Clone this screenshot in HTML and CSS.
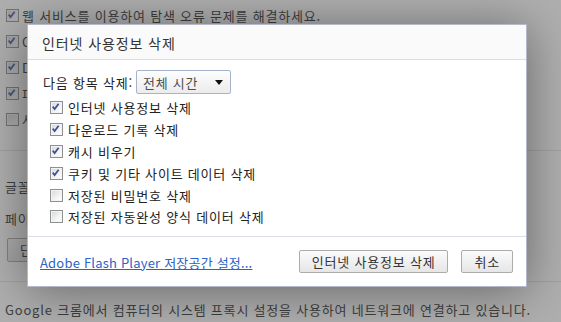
FILE: index.html
```html
<!DOCTYPE html>
<html lang="ko">
<head>
<meta charset="utf-8">
<title>인터넷 사용정보 삭제</title>
<link rel="stylesheet" href="styles.css">
</head>
<body>
<div class="page">
  <div class="bg-group">
    <div class="bg-row"><span class="cb checked"><svg viewBox="0 0 13 13"><path d="M3 6.5 L5.3 9.3 L10 3"/></svg></span><span>웹 서비스를 이용하여 탐색 오류 문제를 해결하세요.</span></div>
    <div class="bg-row"><span class="cb checked"><svg viewBox="0 0 13 13"><path d="M3 6.5 L5.3 9.3 L10 3"/></svg></span><span>Chrome 예측 서비스 사용</span></div>
    <div class="bg-row"><span class="cb checked"><svg viewBox="0 0 13 13"><path d="M3 6.5 L5.3 9.3 L10 3"/></svg></span><span>DNS 사전 가져오기 사용</span></div>
    <div class="bg-row"><span class="cb checked"><svg viewBox="0 0 13 13"><path d="M3 6.5 L5.3 9.3 L10 3"/></svg></span><span>피싱 및 악성코드 차단 사용</span></div>
    <div class="bg-row"><span class="cb"></span><span>사용 통계 보내기</span></div>
  </div>
  <div class="bg-group web">
    <div class="bg-line first">글꼴 크기:</div>
    <div class="bg-line">페이지 확대/축소:</div>
    <div class="bg-btn">단축키 설정...</div>
  </div>
  <div class="bg-group net">
    <div class="bg-line">Google 크롬에서 컴퓨터의 시스템 프록시 설정을 사용하여 네트워크에 연결하고 있습니다.</div>
  </div>
</div>
<div class="overlay"></div>
<div class="dialog">
  <div class="dlg-head">인터넷 사용정보 삭제</div>
  <div class="dlg-body">
    <div class="range">
      <span>다음 항목 삭제:</span>
      <span class="select"><span>전체 시간</span><span class="tri"></span></span>
    </div>
    <div class="opts">
      <div class="opt"><span class="cb checked"><svg viewBox="0 0 13 13"><path d="M3 6.5 L5.3 9.3 L10 3"/></svg></span><span>인터넷 사용정보 삭제</span></div>
      <div class="opt"><span class="cb checked"><svg viewBox="0 0 13 13"><path d="M3 6.5 L5.3 9.3 L10 3"/></svg></span><span>다운로드 기록 삭제</span></div>
      <div class="opt"><span class="cb checked"><svg viewBox="0 0 13 13"><path d="M3 6.5 L5.3 9.3 L10 3"/></svg></span><span>캐시 비우기</span></div>
      <div class="opt"><span class="cb checked"><svg viewBox="0 0 13 13"><path d="M3 6.5 L5.3 9.3 L10 3"/></svg></span><span>쿠키 및 기타 사이트 데이터 삭제</span></div>
      <div class="opt"><span class="cb"></span><span>저장된 비밀번호 삭제</span></div>
      <div class="opt"><span class="cb"></span><span>저장된 자동완성 양식 데이터 삭제</span></div>
    </div>
  </div>
  <div class="dlg-foot">
    <a class="link" href="#">Adobe Flash Player 저장공간 설정...</a>
    <div class="btns">
      <span class="btn">인터넷 사용정보 삭제</span>
      <span class="btn">취소</span>
    </div>
  </div>
</div>
</body>
</html>
```
FILE: styles.css
```css
html, body {
  margin: 0;
  padding: 0;
}
body {
  width: 561px;
  height: 322px;
  overflow: hidden;
  position: relative;
  background: #fff;
  font-family: "Noto Sans CJK KR", "Noto Sans", sans-serif;
  font-size: 13px;
  letter-spacing: 0.8px;
  color: #2a2a2a;
}
.page {
  display: flex;
  flex-direction: column;
}
.bg-group {
  display: flex;
  flex-direction: column;
  border-bottom: 1px solid #e2e2e2;
}
.bg-group:first-child {
  padding: 2px 0 18px 6px;
}
.bg-row {
  display: flex;
  align-items: center;
  gap: 3px;
  height: 26px;
  white-space: nowrap;
}
.bg-group.web {
  padding: 20px 0 19px 5px;
}
.bg-line {
  height: 31px;
  line-height: 31px;
  white-space: nowrap;
}
.bg-line.first {
  height: 32px;
}
.bg-btn {
  margin-top: 4px;
  margin-left: 2px;
  width: 80px;
  height: 22px;
  line-height: 22px;
  border: 1px solid #aaa;
  border-radius: 2px;
  padding-left: 12px;
  background: linear-gradient(#fafafa, #e8e8e8);
  white-space: nowrap;
}
.bg-group.net {
  border-bottom: none;
  padding: 12px 0 0 5px;
}
.cb {
  width: 11px;
  height: 11px;
  border: 1px solid #8e8f8f;
  background: linear-gradient(135deg, #d6d6d6, #f8f8f8 70%, #fff);
  box-shadow: inset 0 0 0 1px #f4f4f4;
  display: inline-flex;
  flex: none;
}
.cb svg {
  width: 11px;
  height: 11px;
}
.cb path {
  fill: none;
  stroke: #3a4ea2;
  stroke-width: 2;
  transform: translate(-1px, -1px);
}
.overlay {
  position: absolute;
  inset: 0;
  background: rgba(86, 86, 86, 0.47);
}
.dialog {
  position: absolute;
  left: 27px;
  top: 24px;
  width: 498px;
  height: 261px;
  border: 1px solid #b4b8c8;
  background: #fff;
  box-shadow: 0 4px 46px rgba(0, 0, 0, 0.42);
  display: flex;
  flex-direction: column;
  color: #222;
}
.dlg-head {
  box-sizing: border-box;
  height: 35px;
  background: #fafafa;
  border-bottom: 1px solid #dcdce4;
  padding-left: 14px;
  font-size: 14px;
  letter-spacing: 0.9px;
  line-height: 36px;
  color: #333;
}
.dlg-body {
  padding: 10px 0 8px 15px;
  flex: 1;
  border-bottom: 1px solid #dcdce4;
}
.range {
  display: flex;
  align-items: center;
  gap: 3px;
  height: 24px;
}
.select {
  width: 80px;
  height: 22px;
  border: 1px solid #a6b4cb;
  border-radius: 2px;
  background: linear-gradient(#fdfdfd, #ececec);
  display: flex;
  align-items: center;
  justify-content: space-between;
  padding: 0 7px 0 6px;
  color: #505050;
}
.tri {
  width: 0;
  height: 0;
  border-left: 4px solid transparent;
  border-right: 4px solid transparent;
  border-top: 5px solid #111;
  margin-top: 1px;
}
.opts {
  margin-top: 3px;
  padding-left: 7px;
  display: flex;
  flex-direction: column;
}
.opt {
  display: flex;
  align-items: center;
  gap: 5px;
  height: 21.8px;
  white-space: nowrap;
}
.dlg-foot {
  height: 50px;
  display: flex;
  align-items: center;
  justify-content: space-between;
  padding: 0 13px 0 12px;
}
.link {
  color: #2d62c6;
  text-decoration: underline;
  margin-top: 2px;
  letter-spacing: 0.2px;
}
.btns {
  display: flex;
  gap: 13px;
}
.btn {
  height: 21px;
  line-height: 21px;
  border: 1px solid #acacac;
  border-radius: 2px;
  background: linear-gradient(#fbfbfb, #e6e6e6);
  padding: 0 12px;
  color: #333;
  white-space: nowrap;
}
```
